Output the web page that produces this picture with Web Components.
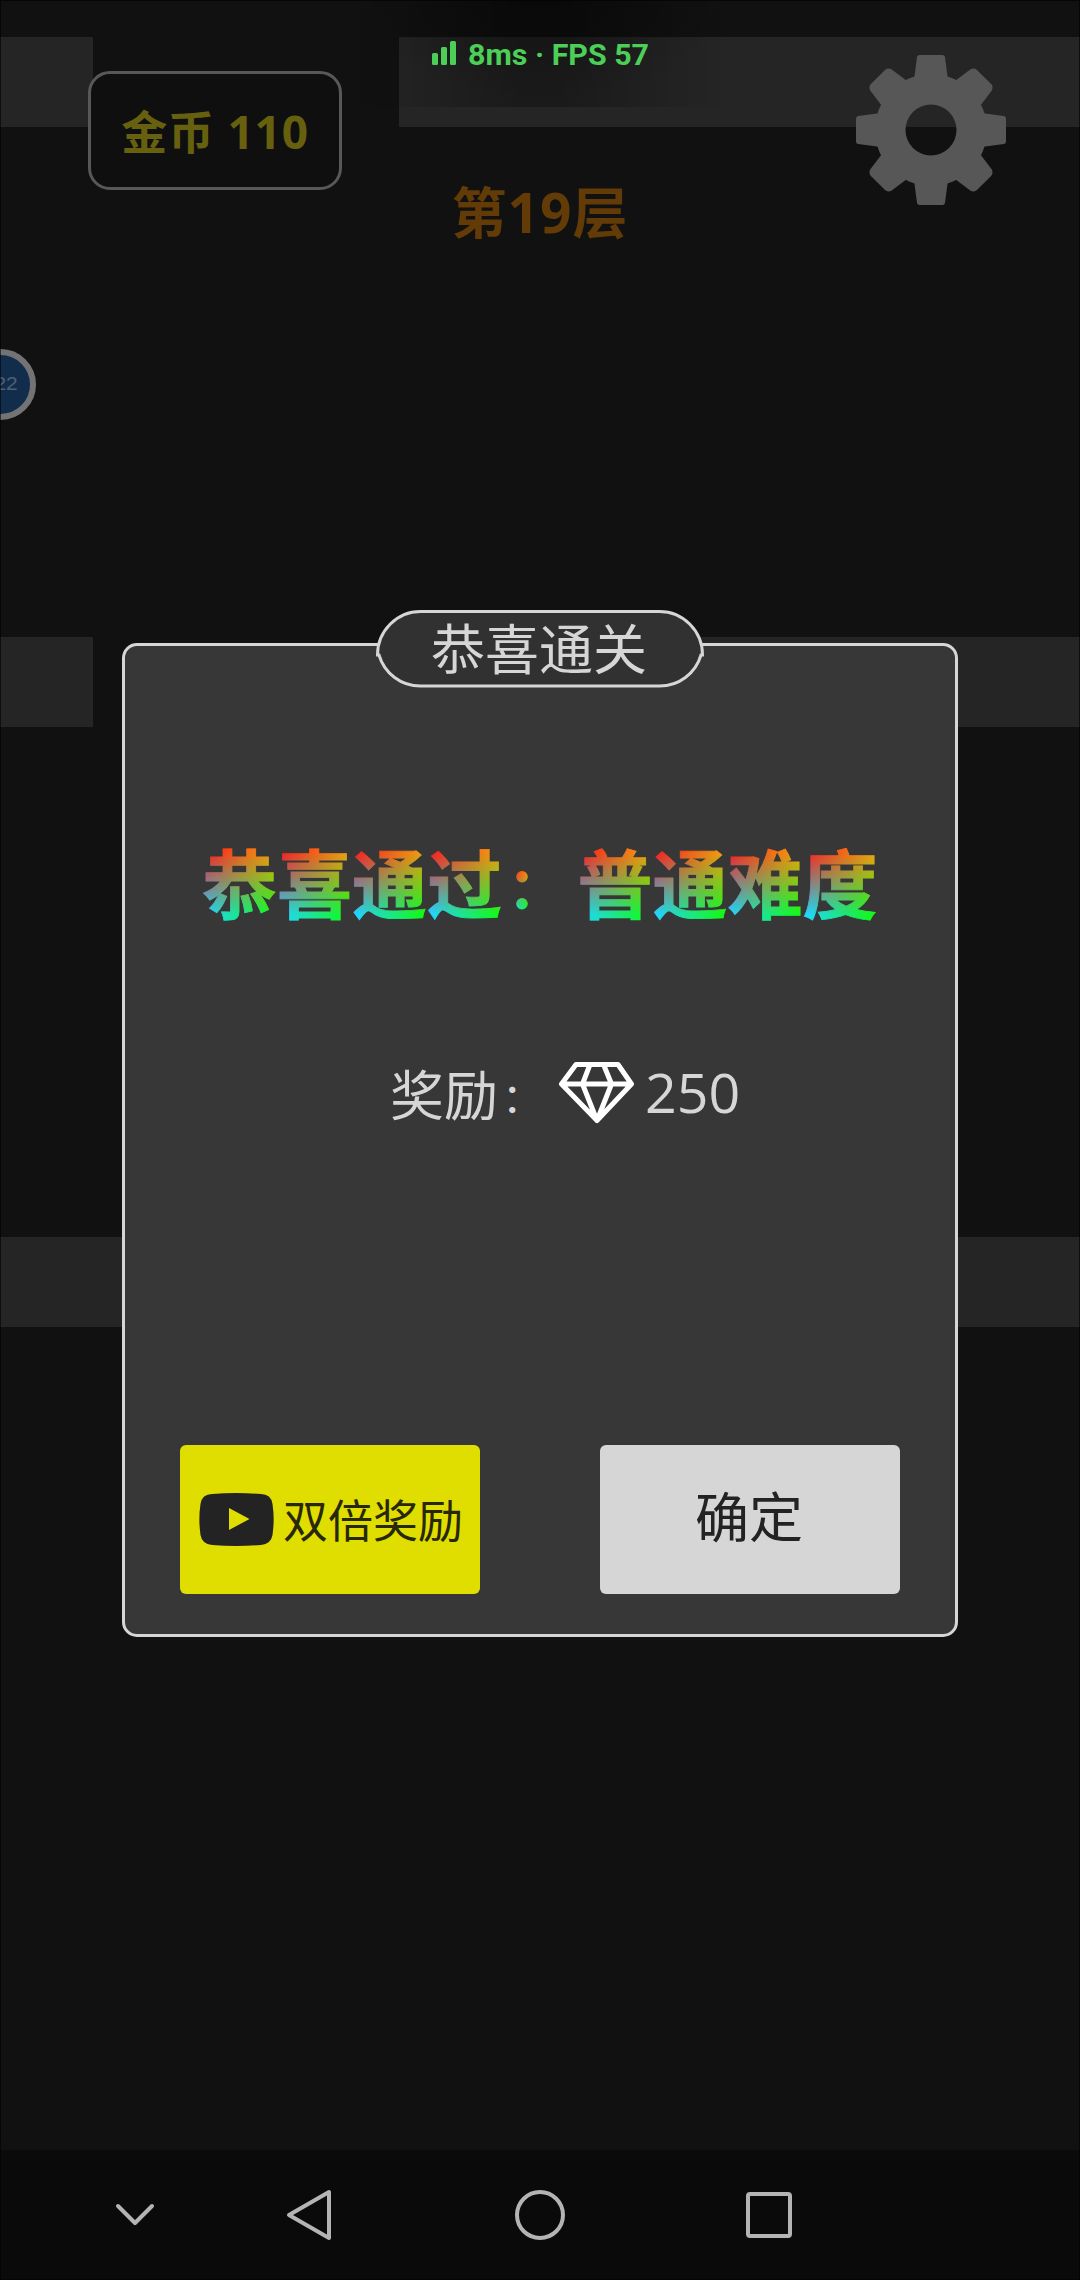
<!DOCTYPE html>
<html lang="zh-CN">
<head>
<meta charset="utf-8">
<title>恭喜通关</title>
<style>
html,body{margin:0;background:#111}
body{width:1080px;height:2280px;overflow:hidden}
</style>
</head>
<body>
<game-screen>
  <game-scene slot="scene"></game-scene>
  <perf-meter slot="meter" ping="8ms" fps="57"></perf-meter>
  <game-hud slot="hud" level="第19层"><coin-box slot="coins">金币 110</coin-box><gear-icon slot="settings"></gear-icon></game-hud>
  <float-badge slot="badge">22</float-badge>
  <win-dialog slot="dialog">
    <dialog-title slot="title">恭喜通关</dialog-title>
    <rainbow-text></rainbow-text>
    <reward-line amount="250">奖励<span slot="colon">：</span></reward-line>
    <game-button slot="actions" kind="video"><video-icon slot="icon"></video-icon>双倍奖励</game-button>
    <game-button slot="actions">确定</game-button>
  </win-dialog>
  <nav-bar slot="nav"></nav-bar>
</game-screen>
<script>
const CJK = '"Open Sans","Noto Sans CJK SC",sans-serif';
function define(name, html) {
  customElements.define(name, class extends HTMLElement {
    constructor() {
      super();
      this.attachShadow({mode: 'open'});
    }
    connectedCallback() {
      this.shadowRoot.innerHTML = html(this);
    }
  });
}

define('game-screen', () => `<style>
:host{display:grid;grid-template:2280px/1080px;width:1080px;height:2280px;overflow:hidden;background:#111;font-family:${CJK}}
.layer{grid-area:1/1;display:flex;flex-direction:column;min-width:0}
.dialog{padding:610px 0 0 122px;align-items:flex-start}
.end{justify-content:flex-end}
.badge{padding-top:349px}
.frame{grid-area:1/1;border:1px solid rgba(0,0,0,.6)}
</style>
<div class="layer"><slot name="scene"></slot></div>
<div class="layer"><slot name="meter"></slot></div>
<div class="layer"><slot name="hud"></slot></div>
<div class="layer badge"><slot name="badge"></slot></div>
<div class="layer dialog"><slot name="dialog"></slot></div>
<div class="layer end"><slot name="nav"></slot></div>
<div class="frame"></div>`);

define('game-scene', () => `<style>
:host{display:flex;flex-direction:column;gap:510px;padding-top:37px}
.row{display:flex;height:90px;justify-content:space-between}
i{background:#252525}
.a{width:93px}.b{width:681px}.full{flex:1}
</style>
<div class="row"><i class="a"></i><i class="b"></i></div>
<div class="row"><i class="a"></i><i class="b"></i></div>
<div class="row"><i class="full"></i></div>`);

define('perf-meter', el => `<style>
:host{display:flex;width:400px;height:107px;margin-left:340px;box-sizing:border-box;padding:37px 0 0 92px;background:linear-gradient(rgba(0,0,0,.12),transparent 50%) 100px 0/200px 0 no-repeat,linear-gradient(90deg,transparent,rgba(0,0,0,.08) 15%,rgba(0,0,0,.3) 45%,rgba(0,0,0,.3) 55%,rgba(0,0,0,.08) 85%,transparent),radial-gradient(ellipse 190px 100px at 200px 0,rgba(0,0,0,.25),transparent)}
svg{display:block;margin:4px 12px 0 0;flex:none}
span{font:700 30.400px/35px Roboto,sans-serif;color:#4bcf57;white-space:pre}
</style>
<svg width="24" height="24" fill="#4bcf57"><rect y="12" width="6" height="12" rx="1.5"/><rect x="9" y="6" width="6" height="18" rx="1.5"/><rect x="18" width="6" height="24" rx="1.5"/></svg>
<span>${el.getAttribute('ping')} · FPS ${el.getAttribute('fps')}</span>`);

define('game-hud', el => `<style>
:host{display:grid;grid-template-columns:254px 396px 118px 150px;padding:0 74px 0 88px;align-items:start}
.coin{padding-top:71px}
.gear{padding-top:55px;grid-column:4}
.level{padding-top:176px;text-align:center;font-weight:700;font-size:55px;letter-spacing:1px;line-height:72px;color:#633b07}
</style>
<div class="coin"><slot name="coins"></slot></div>
<div class="level">${el.getAttribute('level')}</div>
<div class="gear"><slot name="settings"></slot></div>`);

define('coin-box', () => `<style>
:host{display:flex;align-items:center;justify-content:center;box-sizing:border-box;width:254px;height:119px;border:3px solid #585858;border-radius:22px;background:#0f0f0f;color:#66600f;font-weight:700;font-size:46px;letter-spacing:.8px;line-height:60px;white-space:pre}
</style><slot></slot>`);

define('gear-icon', () => {
  const tooth = '<path d="M-17 -50L-14 -73Q-13.5 -75 -11.5 -75H11.5Q13.5 -75 14 -73L17 -50Z"/>';
  const diag = '<path d="M-18 -50L-15 -71Q-13.5 -75 -10 -75H10Q13.500 -75 15 -71L18 -50Z"/>';
  return `<style>:host{display:block}svg{display:block}</style>
<svg width="150" height="150" viewBox="-75 -75 150 150" fill="#575757">
<path fill-rule="evenodd" d="M0 -56A56 56 0 0 1 0 56A56 56 0 0 1 0 -56ZM0 -25.500A25.500 25.500 0 0 0 0 25.500A25.500 25.500 0 0 0 0 -25.500Z"/>
${[0,90,180,270].map(a => `<g transform="rotate(${a})">${tooth}</g>`).join('')}
${[45,135,225,315].map(a => `<g transform="rotate(${a})">${diag}</g>`).join('')}
</svg>`;
});

define('float-badge', () => `<style>
:host{display:flex;align-items:center;justify-content:center;box-sizing:border-box;width:71px;height:71px;margin-left:-35px;border:6px solid #737375;border-radius:50%;background:#122d4b;color:#4e5f72;font:400 21px/22px "Liberation Mono",monospace;letter-spacing:-1px}
span{padding-left:10px}
</style><span><slot></slot></span>`);

define('win-dialog', () => `<style>
:host{display:grid;grid-template:33px 994px/836px}
.panel{grid-area:2/1;display:flex;flex-direction:column;box-sizing:border-box;border:3px solid #d6d6d6;border-radius:15px;background:#373737;padding:180px 55px 40px}
.head{grid-area:1/1;display:flex;justify-content:center;z-index:1}
.actions{display:flex;justify-content:space-between;margin-top:auto}
</style>
<div class="head"><slot name="title"></slot></div>
<div class="panel"><slot></slot><div class="actions"><slot name="actions"></slot></div></div>`);

define('dialog-title', () => `<style>
:host{display:grid;grid-template:78px/328px;height:78px}
svg{grid-area:1/1}
span{grid-area:1/1;text-align:center;font-size:54px;line-height:78px;color:#d6d6d6;margin-left:-2px}
</style>
<svg width="328" height="78"><path d="M1.500 45A43 43.500 0 0 1 44.500 1.500H283.500A43 43.500 0 0 1 326.500 45L325 45A43 43 0 0 1 283.500 76H44.500A43 43 0 0 1 3 45Z" fill="#313131" stroke="#d6d6d6" stroke-width="3"/></svg>
<span><slot></slot></span>`);

define('rainbow-text', () => `<style>
:host{display:block;margin:0 0 0 23px}svg{display:block}
text{font:700 75px "Noto Sans CJK SC",sans-serif;stroke-width:.8px}
.colon{font-size:56px}
</style>
<svg width="690" height="110">
<defs>
<linearGradient id="l" x2="0" y2="1"><stop offset=".06" stop-color="#fb1c18"/><stop offset=".92" stop-color="#20d6ff"/></linearGradient>
<linearGradient id="r" x2="0" y2="1"><stop offset=".06" stop-color="#f79b12"/><stop offset=".92" stop-color="#10fa18"/></linearGradient>
<linearGradient id="h"><stop offset=".06" stop-color="#fff"/><stop offset=".94" stop-color="#000"/></linearGradient>
<mask id="m" maskContentUnits="objectBoundingBox" style="mask-type:luminance" color-interpolation="sRGB"><rect width="1" height="1" fill="url(#h)"/></mask>
<pattern id="cell" patternUnits="userSpaceOnUse" x="-1" y="20" width="75" height="75"><rect width="75" height="75" fill="url(#r)"/><rect width="75" height="75" fill="url(#l)" mask="url(#m)"/></pattern>
<pattern id="dots" patternUnits="userSpaceOnUse" x="306" y="30" width="22" height="68"><rect y="14" width="22" height="41" fill="url(#r)"/><rect y="14" width="22" height="41" fill="url(#l)" mask="url(#m)"/></pattern>
</defs>
<text x="-1" y="86.500" fill="url(#cell)" stroke="url(#cell)">恭喜通过<tspan class="colon" x="305" y="82" fill="url(#dots)" stroke="url(#dots)">：</tspan><tspan x="374.500" y="86.500">普通难度</tspan></text></svg>`);

define('reward-line', el => `<style>
:host{display:flex;align-items:center;height:80px;margin:119px 0 0 210px;color:#d6d6d6}
.label{width:108px;font-size:54px;line-height:76px;margin-top:0}
.colon{width:61px;font-size:41px;line-height:60px;margin-top:4px;text-indent:4px}
svg{display:block;margin-top:-5px}
.num{font-size:55.500px;line-height:80px;margin:-7px 0 0 11px}
</style>
<span class="label"><slot></slot></span><span class="colon"><slot name="colon"></slot></span>
<svg width="75" height="62" fill="none" stroke="#fff" stroke-width="5" stroke-linejoin="round"><path d="M17 2.500H59L72.500 22L38 58.500L2.500 22ZM2.500 22H72.500M31 2.500L23.500 22L38 58.500L52.500 22L44.500 2.500"/></svg>
<span class="num">${el.getAttribute('amount')}</span>`);

define('game-button', el => `<style>
:host{display:flex;align-items:center;justify-content:center;box-sizing:border-box;width:300px;height:149px;border-radius:6px;background:#d6d6d6;color:#232323;font-size:54px;line-height:70px}
span{margin:-5px 2px 0 0}
:host([kind=video]){background:#e0de00;color:#292805;font-size:45px;gap:9px}
:host([kind=video]) span{margin:3px 0 0}
</style><slot name="icon"></slot><span><slot></slot></span>`);

define('video-icon', () => `<style>:host{display:block;margin-left:2px}svg{display:block}</style>
<svg width="75" height="53"><path fill="#232323" fill-rule="evenodd" d="M13 1Q37.500 -.8 62 1Q72 1 73.500 11Q75.800 26 73.500 42Q72 51 62 52Q37.500 53.800 13 52Q3 51 1.500 42Q-.8 26 1.500 11Q3 1 13 1ZM30 15V37L50.500 26Z"/></svg>`);

define('nav-bar', () => `<style>
:host{display:grid;grid-template-columns:270px 155px 230px 228px;height:130px;background:#0a0a0a;align-items:center;justify-items:center}
svg{display:block;fill:none;stroke:#b4b4b4;stroke-width:4;stroke-linejoin:round;stroke-linecap:round}
</style>
<svg width="40" height="24"><path d="M3 3L20 20L37 3"/></svg>
<svg width="46" height="52" style="margin-left:-77px"><path d="M43 3V49L3 26Z"/></svg>
<svg width="52" height="52"><circle cx="26" cy="26" r="23"/></svg>
<svg width="46" height="46"><rect x="2" y="2" width="42" height="42" rx="2"/></svg>`);
</script>
</body>
</html>
